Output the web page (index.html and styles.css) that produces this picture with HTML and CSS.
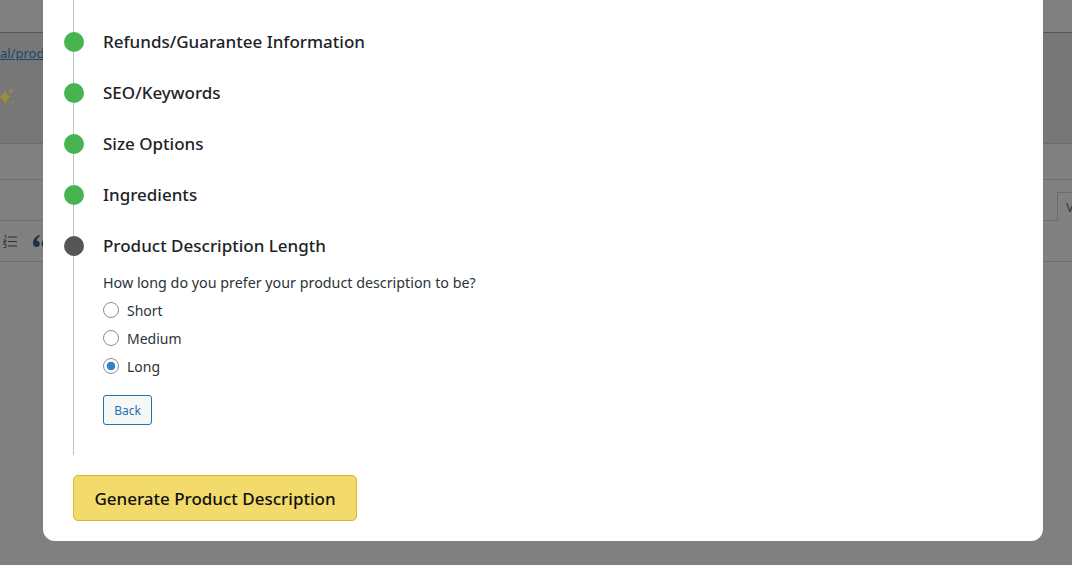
FILE: index.html
```html
<!DOCTYPE html>
<html lang="en">
<head>
<meta charset="UTF-8">
<title>Generate Product Description</title>
<link rel="stylesheet" href="styles.css">
</head>
<body>
<div class="page">
  <div class="page-top"></div>
  <div class="page-fields">
    <a class="permalink" href="#">al/prod</a>
    <svg class="sparkle" width="18" height="20" viewBox="0 0 18 20">
      <path d="M5 0.500 C5.800 6 7.400 8 11.500 9 C7.400 10 5.800 12 5 17.500 C4.200 12 2.600 10 -1.500 9 C2.600 8 4.200 6 5 0.500Z" fill="#a08a3c"/>
      <path d="M11 0 C11.300 1.800 11.900 2.500 14 3 C11.900 3.500 11.300 4.200 11 6 C10.700 4.200 10.100 3.500 8 3 C10.100 2.500 10.700 1.800 11 0Z" fill="#a08a3c"/>
      <path d="M13 12 C13.200 13.100 13.600 13.600 15 14 C13.600 14.400 13.200 14.900 13 16 C12.800 14.900 12.400 14.400 11 14 C12.400 13.600 12.800 13.100 13 12Z" fill="#a08a3c"/>
    </svg>
  </div>
  <div class="page-band"></div>
  <div class="page-tabs"><span class="tab">V</span></div>
  <div class="page-toolbar">
    <svg class="list-icon" width="14" height="13" viewBox="0 0 14 13">
      <path d="M5 2H14M5 6.500H14M5 11H14" stroke="#2a2f36" stroke-width="1"/>
      <path d="M1.500 0.500H2.800V3.500M0.500 5H3V6.500H0.500V8H3M0.500 9.500H3V12.500H0.500" stroke="#2f3d50" stroke-width="1" fill="none"/>
    </svg>
    <svg class="quote-icon" width="11" height="12" viewBox="0 0 11 12">
      <path d="M7 0 C3 1 0 4 0 8 C0 10.500 1.500 12 3.500 12 C5.500 12 6.800 10.600 6.800 8.800 C6.800 7 5.500 5.800 3.800 5.800 C4 3.800 5.300 2 7 1Z" fill="#1f2f45"/>
      <path d="M11 4 C9.500 5.500 8.500 7 8.500 9 C8.500 10.800 9.600 12 11 12Z" fill="#1f2f45"/>
    </svg>
  </div>
</div>

<div class="modal">
  <ul class="steps">
    <li class="step done"><h3>Refunds/Guarantee Information</h3></li>
    <li class="step done"><h3>SEO/Keywords</h3></li>
    <li class="step done"><h3>Size Options</h3></li>
    <li class="step done"><h3>Ingredients</h3></li>
    <li class="step current">
      <h3>Product Description Length</h3>
      <p class="question">How long do you prefer your product description to be?</p>
      <label class="option"><input type="radio" name="length"> Short</label>
      <label class="option"><input type="radio" name="length"> Medium</label>
      <label class="option"><input type="radio" name="length" checked> Long</label>
      <button class="back">Back</button>
    </li>
  </ul>
  <button class="generate">Generate Product Description</button>
</div>
</body>
</html>
```
FILE: styles.css
```css
* {
  box-sizing: border-box;
}
html, body {
  height: 100%;
}
body {
  margin: 0;
  background: #808080;
  font-family: "Noto Sans", "Open Sans", sans-serif;
  color: #1d2327;
  overflow: hidden;
  position: relative;
}

/* greyed page behind the dialog */
.page-top {
  height: 33px;
  border-bottom: 1px solid #565656;
}
.page-fields {
  height: 111px;
  background: #777;
  border-bottom: 1px solid #6b6b6b;
  padding-top: 11px;
}
.permalink {
  display: block;
  color: #1d4866;
  font-size: 13px;
  line-height: 18px;
}
.sparkle {
  display: block;
  margin-top: 26px;
  overflow: visible;
}
.page-band {
  height: 36px;
  border-bottom: 1px solid #6b6b6b;
}
.page-tabs {
  height: 41px;
  border-bottom: 1px solid #6b6b6b;
  display: flex;
  justify-content: flex-end;
  align-items: flex-end;
}
.tab {
  width: 15px;
  height: 29px;
  margin-bottom: -1px;
  border: 1px solid #6b6b6b;
  border-right: none;
  border-bottom: none;
  background: #808080;
  color: #2a3a4a;
  font-size: 13px;
  padding: 5px 0 0 8px;
  overflow: hidden;
}
.page-toolbar {
  height: 41px;
  border-bottom: 1px solid #6b6b6b;
  display: flex;
  align-items: center;
  padding-left: 3px;
  gap: 16px;
}

/* dialog */
.modal {
  position: absolute;
  left: 43px;
  top: 0;
  width: 1000px;
  height: 541px;
  background: #fff;
  border-radius: 0 0 12px 12px;
  padding-left: 30px;
}
.steps {
  list-style: none;
  margin: 0;
  padding: 29px 0 0;
  height: 455px;
  border-left: 1px solid #c3c4c7;
}
.step {
  position: relative;
  padding-left: 29px;
  padding-bottom: 25px;
}
.step::before {
  content: "";
  position: absolute;
  left: -10px;
  top: 3px;
  width: 20px;
  height: 20px;
  border-radius: 50%;
}
.done::before {
  background: #46b450;
}
.current::before {
  background: #555;
}
.step h3 {
  margin: 0;
  font-size: 17px;
  font-weight: 500;
  line-height: 26px;
  color: #1d2327;
}
.question {
  margin: 14px 0 3px;
  font-size: 14.3px;
  line-height: 20px;
  color: #2c3338;
}
.option {
  display: flex;
  align-items: center;
  height: 28px;
  font-size: 14px;
  color: #2c3338;
}
.option input {
  appearance: none;
  width: 16px;
  height: 16px;
  margin: 0 8px 0 0;
  border: 1px solid #8c8f94;
  border-radius: 50%;
  background: #fff;
}
.option input:checked {
  background: radial-gradient(circle, #3582c4 0 4px, #fff 4.6px);
}
.back {
  display: block;
  margin-top: 15px;
  width: 49px;
  height: 30px;
  padding: 0;
  background: #f6f7f7;
  border: 1px solid #2271b1;
  border-radius: 3px;
  color: #2271b1;
  font: 12px "Noto Sans", sans-serif;
}
.generate {
  display: block;
  margin-top: 20px;
  width: 284px;
  height: 46px;
  padding: 0;
  background: #f2db6b;
  border: 1px solid #dcb72c;
  border-radius: 5px;
  color: #111;
  font: 500 17px "Noto Sans", sans-serif;
}
```
